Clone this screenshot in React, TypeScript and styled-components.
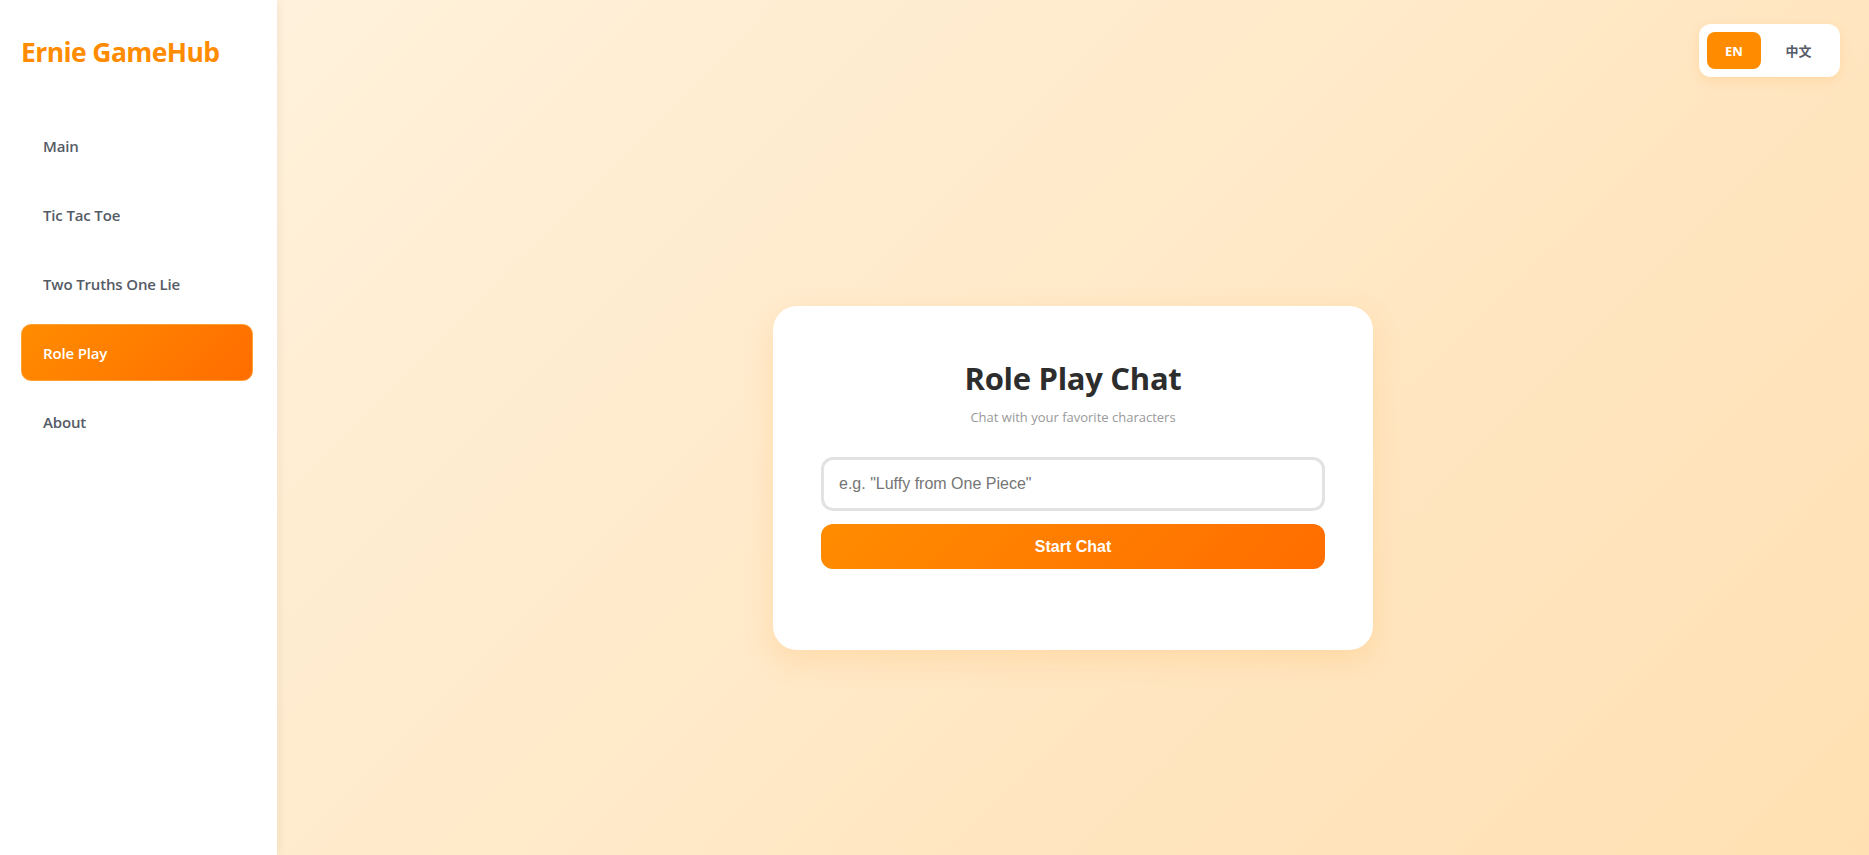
import React, { useState } from "react";
import styled, { createGlobalStyle } from "styled-components";

const GlobalStyle = createGlobalStyle`
  html, body { margin: 0; padding: 0; height: 100%; }
  body { font-family: "Open Sans", "Noto Sans", sans-serif; }
  #root { height: 100%; }
  * { box-sizing: border-box; }
`;

const Layout = styled.div`
  display: flex;
  width: 100%;
  height: 100vh;
  background: linear-gradient(135deg, #fff3e0 0%, #ffe0b2 100%);
`;

const Sidebar = styled.aside`
  width: 277px;
  flex-shrink: 0;
  background: #ffffff;
  box-shadow: 2px 0 10px rgba(0, 0, 0, 0.05);
  display: flex;
  flex-direction: column;
  padding: 32px 24px 0 21px;
`;

const Logo = styled.div`
  font-family: "Open Sans", "Noto Sans", sans-serif;
  font-size: 26.5px;
  font-weight: 700;
  color: #ff8c00;
  letter-spacing: -0.6px;
  line-height: 40px;
`;

const Nav = styled.nav`
  display: flex;
  flex-direction: column;
  gap: 12px;
  margin-top: 45px;
`;

const NavItem = styled.div<{ $active?: boolean }>`
  height: 57px;
  display: flex;
  align-items: center;
  padding-left: 21px;
  border-radius: 10px;
  font-size: 15px;
  font-weight: 600;
  letter-spacing: -0.15px;
  color: ${(p) => (p.$active ? "#ffffff" : "#555b66")};
  background: ${(p) =>
    p.$active ? "linear-gradient(135deg, #ff8c00 0%, #ff6d00 100%)" : "transparent"};
  border: 1px solid ${(p) => (p.$active ? "#ffa033" : "transparent")};
  cursor: pointer;
`;

const Main = styled.main`
  flex: 1;
  display: flex;
  flex-direction: column;
  min-width: 0;
`;

const Header = styled.header`
  display: flex;
  justify-content: flex-end;
  padding: 24px 29px 24px 0;
`;

const LangToggle = styled.div`
  display: flex;
  gap: 4px;
  padding: 8px;
  background: #ffffff;
  border-radius: 12px;
  box-shadow: 0 4px 12px rgba(255, 140, 0, 0.15);
`;

const LangButton = styled.button<{ $active?: boolean }>`
  width: ${(p) => (p.$active ? "54px" : "67px")};
  height: 37px;
  border: none;
  border-radius: 8px;
  font-family: "Noto Sans", "Noto Sans CJK SC", sans-serif;
  font-size: 13px;
  font-weight: 700;
  color: ${(p) => (p.$active ? "#ffffff" : "#555b66")};
  background: ${(p) => (p.$active ? "#ff8c00" : "transparent")};
  cursor: pointer;
`;

const Content = styled.div`
  flex: 1;
  display: flex;
  align-items: center;
  justify-content: center;
`;

const Card = styled.div`
  width: 600px;
  height: 344px;
  background: #ffffff;
  border-radius: 24px;
  box-shadow: 0 10px 30px rgba(255, 140, 0, 0.15);
  padding: 44px 48px 0;
  display: flex;
  flex-direction: column;
  align-items: center;
`;

const Title = styled.h1`
  margin: 0;
  font-family: "Open Sans", "Noto Sans", sans-serif;
  font-size: 31px;
  font-weight: 700;
  color: #2d2d2d;
  line-height: 56px;
  letter-spacing: -0.3px;
`;

const Subtitle = styled.p`
  margin: 1px 0 0;
  font-size: 13px;
  color: #999999;
  line-height: 20px;
`;

const Form = styled.div`
  width: 100%;
  display: flex;
  flex-direction: column;
  gap: 13px;
  margin-top: 30px;
`;

const Input = styled.input`
  width: 100%;
  height: 54px;
  border: 3px solid #e2e2e2;
  border-radius: 12px;
  padding: 0 15px;
  font-family: "Liberation Sans", Arial, sans-serif;
  font-size: 16px;
  color: #333;
  outline: none;
  &::placeholder { color: #757575; }
`;

const StartButton = styled.button`
  width: 100%;
  height: 45px;
  border: none;
  border-radius: 12px;
  background: linear-gradient(135deg, #ff8c00 0%, #ff6d00 100%);
  color: #ffffff;
  font-family: "Liberation Sans", Arial, sans-serif;
  font-size: 16px;
  font-weight: 700;
  cursor: pointer;
`;

const navItems = ["Main", "Tic Tac Toe", "Two Truths One Lie", "Role Play", "About"];

export default function App() {
  const [lang, setLang] = useState("en");
  return (
    <>
      <GlobalStyle />
      <Layout>
        <Sidebar>
          <Logo>Ernie GameHub</Logo>
          <Nav>
            {navItems.map((n) => (
              <NavItem key={n} $active={n === "Role Play"}>
                {n}
              </NavItem>
            ))}
          </Nav>
        </Sidebar>
        <Main>
          <Header>
            <LangToggle>
              <LangButton $active={lang === "en"} onClick={() => setLang("en")}>
                EN
              </LangButton>
              <LangButton $active={lang === "zh"} onClick={() => setLang("zh")}>
                中文
              </LangButton>
            </LangToggle>
          </Header>
          <Content>
            <Card>
              <Title>Role Play Chat</Title>
              <Subtitle>Chat with your favorite characters</Subtitle>
              <Form>
                <Input placeholder={'e.g. "Luffy from One Piece"'} />
                <StartButton>Start Chat</StartButton>
              </Form>
            </Card>
          </Content>
        </Main>
      </Layout>
    </>
  );
}
